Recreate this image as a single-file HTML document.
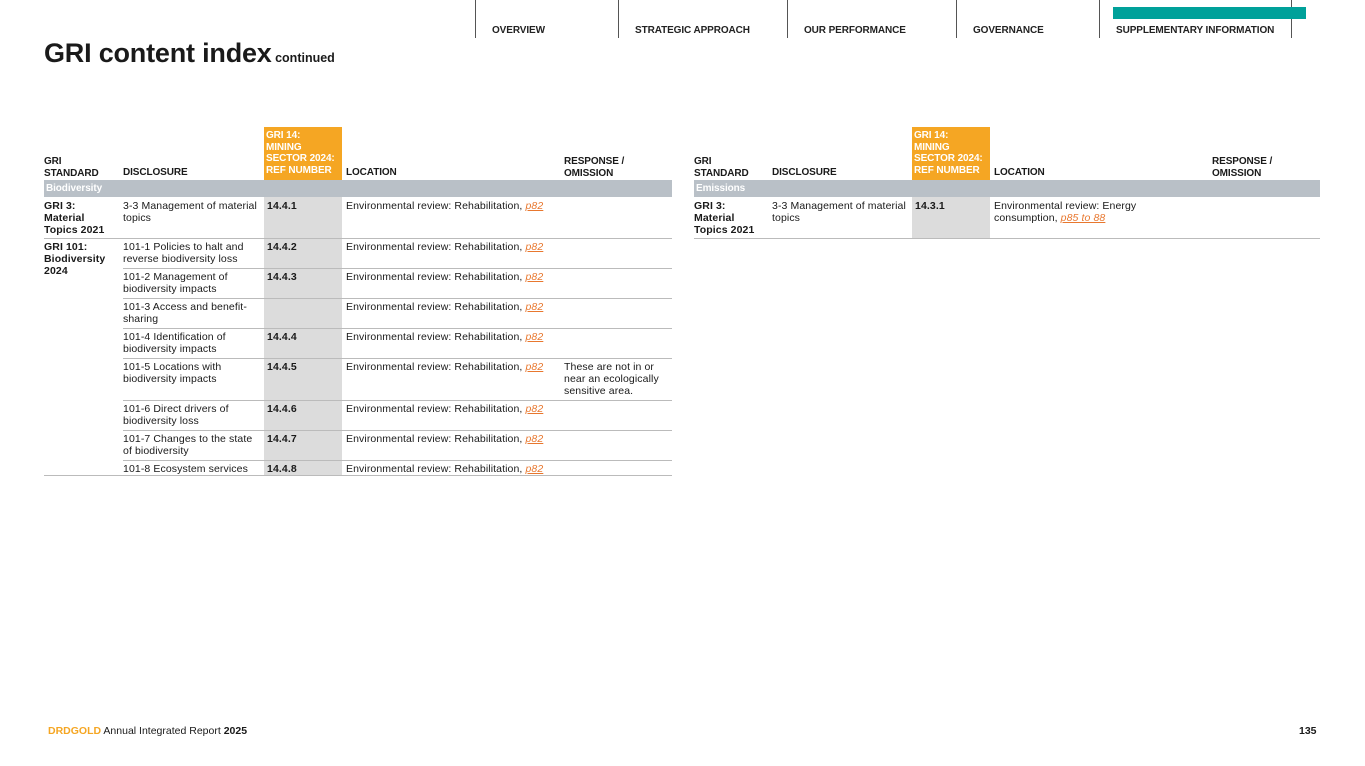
<!DOCTYPE html>
<html><head><meta charset="utf-8"><style>
*{margin:0;padding:0;box-sizing:border-box}
body{width:1365px;height:766px;background:#fff;font-family:"Liberation Sans",sans-serif;color:#1a1a1a;position:relative;overflow:hidden}
.a{position:absolute}
.nav{position:absolute;top:0;height:38px;border-left:1px solid #555}
.nt{position:absolute;top:25px;font-size:10px;font-weight:bold;letter-spacing:-0.1px;color:#222}
.t{position:absolute;font-size:10.5px;line-height:12px;letter-spacing:0.1px;white-space:nowrap}
.b{font-weight:bold}
.h{position:absolute;font-size:10px;line-height:11.5px;font-weight:bold;letter-spacing:-0.1px}
.ln{position:absolute;height:1px;background:#bbb}
.lk{color:#e8772e;font-style:italic;text-decoration:underline}
</style></head><body>
<div class="nav" style="left:475px"></div><div class="nav" style="left:618px"></div><div class="nav" style="left:787px"></div><div class="nav" style="left:956px"></div><div class="nav" style="left:1099px"></div><div class="nav" style="left:1291px"></div>
<div class="a" style="left:1113px;top:7px;width:193px;height:12px;background:#00a19a"></div>
<div class="nt" style="left:492px">OVERVIEW</div>
<div class="nt" style="left:635px">STRATEGIC APPROACH</div>
<div class="nt" style="left:804px">OUR PERFORMANCE</div>
<div class="nt" style="left:973px">GOVERNANCE</div>
<div class="nt" style="left:1116px">SUPPLEMENTARY INFORMATION</div>
<div class="a" style="left:44px;top:38px;font-size:27px;font-weight:bold;letter-spacing:-0.2px;color:#1a1a1a">GRI content index<span style="font-size:12.5px;letter-spacing:0"> continued</span></div>

<!-- Left table -->
<div class="a" style="left:264px;top:127px;width:78px;height:53px;background:#f5a623"></div>
<div class="a" style="left:264px;top:197px;width:78px;height:279px;background:#dcdcdc"></div>
<div class="h" style="left:266px;top:130px;color:#fff">GRI 14:<br>MINING<br>SECTOR 2024:<br>REF NUMBER</div>
<div class="h" style="left:44px;top:156px">GRI<br>STANDARD</div>
<div class="h" style="left:123px;top:167px">DISCLOSURE</div>
<div class="h" style="left:346px;top:167px">LOCATION</div>
<div class="h" style="left:564px;top:156px">RESPONSE /<br>OMISSION</div>
<div class="a" style="left:44px;top:180px;width:628px;height:17px;background:#b9c0c7"></div>
<div class="h" style="left:46px;top:183px;color:#fff">Biodiversity</div>

<div class="t b" style="left:44px;top:200px">GRI 3:<br>Material<br>Topics 2021</div>
<div class="t b" style="left:44px;top:241px">GRI 101:<br>Biodiversity<br>2024</div>
<div class="ln" style="left:44px;top:238px;width:628px"></div>

<div class="t" style="left:123px;top:200px">3-3 Management of material<br>topics</div><div class="t b" style="left:267px;top:200px">14.4.1</div><div class="t" style="left:346px;top:200px">Environmental review: Rehabilitation, <span class="lk">p82</span></div>
<div class="t" style="left:123px;top:241px">101-1 Policies to halt and<br>reverse biodiversity loss</div><div class="t b" style="left:267px;top:241px">14.4.2</div><div class="t" style="left:346px;top:241px">Environmental review: Rehabilitation, <span class="lk">p82</span></div>
<div class="ln" style="left:123px;top:268px;width:549px"></div>
<div class="t" style="left:123px;top:271px">101-2 Management of<br>biodiversity impacts</div><div class="t b" style="left:267px;top:271px">14.4.3</div><div class="t" style="left:346px;top:271px">Environmental review: Rehabilitation, <span class="lk">p82</span></div>
<div class="ln" style="left:123px;top:298px;width:549px"></div>
<div class="t" style="left:123px;top:301px">101-3 Access and benefit-<br>sharing</div><div class="t" style="left:346px;top:301px">Environmental review: Rehabilitation, <span class="lk">p82</span></div>
<div class="ln" style="left:123px;top:328px;width:549px"></div>
<div class="t" style="left:123px;top:331px">101-4 Identification of<br>biodiversity impacts</div><div class="t b" style="left:267px;top:331px">14.4.4</div><div class="t" style="left:346px;top:331px">Environmental review: Rehabilitation, <span class="lk">p82</span></div>
<div class="ln" style="left:123px;top:358px;width:549px"></div>
<div class="t" style="left:123px;top:361px">101-5 Locations with<br>biodiversity impacts</div><div class="t b" style="left:267px;top:361px">14.4.5</div><div class="t" style="left:346px;top:361px">Environmental review: Rehabilitation, <span class="lk">p82</span></div><div class="t" style="left:564px;top:361px">These are not in or<br>near an ecologically<br>sensitive area.</div>
<div class="ln" style="left:123px;top:400px;width:549px"></div>
<div class="t" style="left:123px;top:403px">101-6 Direct drivers of<br>biodiversity loss</div><div class="t b" style="left:267px;top:403px">14.4.6</div><div class="t" style="left:346px;top:403px">Environmental review: Rehabilitation, <span class="lk">p82</span></div>
<div class="ln" style="left:123px;top:430px;width:549px"></div>
<div class="t" style="left:123px;top:433px">101-7 Changes to the state<br>of biodiversity</div><div class="t b" style="left:267px;top:433px">14.4.7</div><div class="t" style="left:346px;top:433px">Environmental review: Rehabilitation, <span class="lk">p82</span></div>
<div class="ln" style="left:123px;top:460px;width:549px"></div>
<div class="t" style="left:123px;top:463px">101-8 Ecosystem services</div><div class="t b" style="left:267px;top:463px">14.4.8</div><div class="t" style="left:346px;top:463px">Environmental review: Rehabilitation, <span class="lk">p82</span></div>
<div class="ln" style="left:44px;top:475px;width:628px"></div>

<!-- Right table -->
<div class="a" style="left:912px;top:127px;width:78px;height:53px;background:#f5a623"></div>
<div class="a" style="left:912px;top:197px;width:78px;height:41px;background:#dcdcdc"></div>
<div class="h" style="left:914px;top:130px;color:#fff">GRI 14:<br>MINING<br>SECTOR 2024:<br>REF NUMBER</div>
<div class="h" style="left:694px;top:156px">GRI<br>STANDARD</div>
<div class="h" style="left:772px;top:167px">DISCLOSURE</div>
<div class="h" style="left:994px;top:167px">LOCATION</div>
<div class="h" style="left:1212px;top:156px">RESPONSE /<br>OMISSION</div>
<div class="a" style="left:694px;top:180px;width:626px;height:17px;background:#b9c0c7"></div>
<div class="h" style="left:696px;top:183px;color:#fff">Emissions</div>
<div class="t b" style="left:694px;top:200px">GRI 3:<br>Material<br>Topics 2021</div>
<div class="t" style="left:772px;top:200px">3-3 Management of material<br>topics</div><div class="t b" style="left:915px;top:200px">14.3.1</div><div class="t" style="left:994px;top:200px">Environmental review: Energy<br>consumption, <span class="lk">p85 to 88</span></div>
<div class="ln" style="left:694px;top:238px;width:626px"></div>

<div class="a" style="left:48px;top:725px;font-size:10.5px"><span style="color:#f5a623;font-weight:bold">DRDGOLD</span> Annual Integrated Report <b>2025</b></div>
<div class="a" style="left:1299px;top:725px;font-size:10.5px;font-weight:bold">135</div>
</body></html>
